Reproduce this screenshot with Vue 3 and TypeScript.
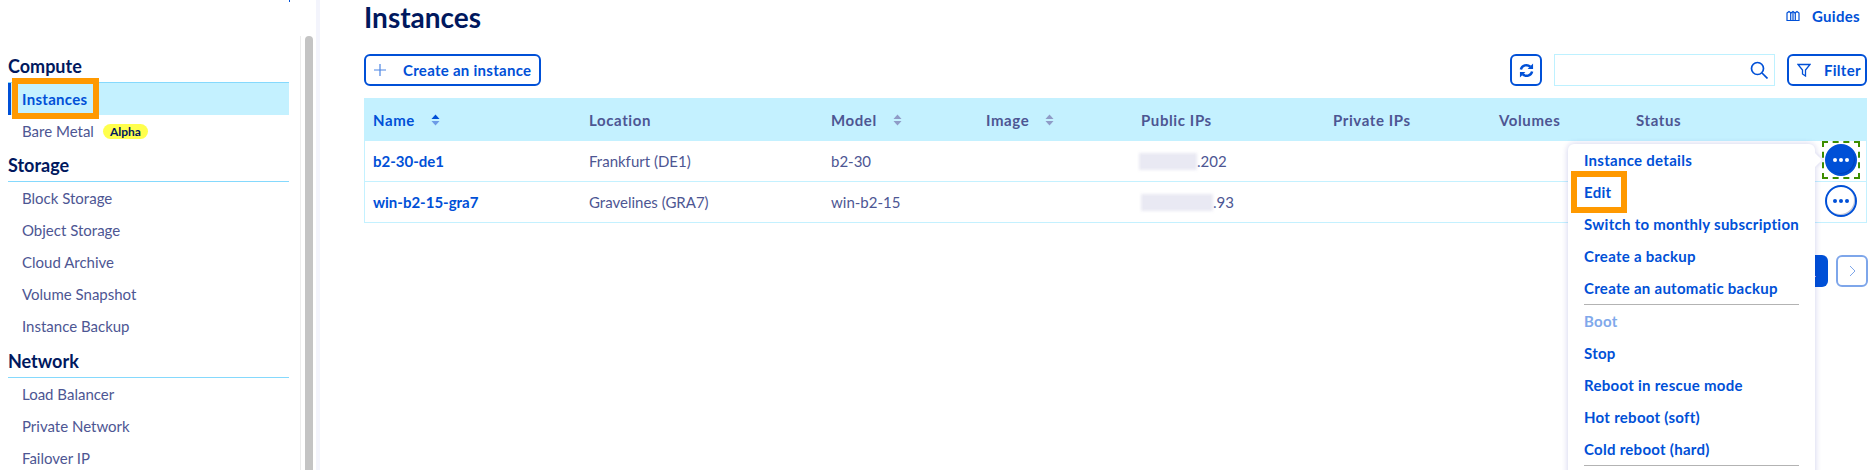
<script setup lang="ts">
interface NavItem {
  label: string;
  active?: boolean;
  badge?: string;
}

interface NavSection {
  title: string;
  items: NavItem[];
}

interface MenuItem {
  label: string;
  disabled?: boolean;
  marked?: boolean;
  divider?: boolean;
}

const sections: NavSection[] = [
  {
    title: 'Compute',
    items: [
      { label: 'Instances', active: true },
      { label: 'Bare Metal', badge: 'Alpha' },
    ],
  },
  {
    title: 'Storage',
    items: [
      { label: 'Block Storage' },
      { label: 'Object Storage' },
      { label: 'Cloud Archive' },
      { label: 'Volume Snapshot' },
      { label: 'Instance Backup' },
    ],
  },
  {
    title: 'Network',
    items: [
      { label: 'Load Balancer' },
      { label: 'Private Network' },
      { label: 'Failover IP' },
    ],
  },
];

const columns = [
  { label: 'Name', sort: 'active' },
  { label: 'Location' },
  { label: 'Model', sort: 'idle' },
  { label: 'Image', sort: 'idle' },
  { label: 'Public IPs' },
  { label: 'Private IPs' },
  { label: 'Volumes' },
  { label: 'Status' },
];

const rows = [
  { name: 'b2-30-de1', location: 'Frankfurt (DE1)', model: 'b2-30', blur: 58, ip: '.202', shift: 0, open: true },
  { name: 'win-b2-15-gra7', location: 'Gravelines (GRA7)', model: 'win-b2-15', blur: 72, ip: '.93', shift: 2, open: false },
];

const menu: MenuItem[] = [
  { label: 'Instance details' },
  { label: 'Edit', marked: true },
  { label: 'Switch to monthly subscription' },
  { label: 'Create a backup' },
  { label: 'Create an automatic backup', divider: true },
  { label: 'Boot', disabled: true },
  { label: 'Stop' },
  { label: 'Reboot in rescue mode' },
  { label: 'Hot reboot (soft)' },
  { label: 'Cold reboot (hard)', divider: true },
];
</script>

<template>
  <div class="page">
    <aside class="sidebar">
      <span class="top-tick"></span>
      <nav class="nav">
        <section v-for="section in sections" :key="section.title" class="nav-section">
          <h4 class="nav-title">{{ section.title }}</h4>
          <div
            v-for="item in section.items"
            :key="item.label"
            class="nav-item"
            :class="{ active: item.active }"
          >
            {{ item.label }}
            <span v-if="item.badge" class="badge">{{ item.badge }}</span>
          </div>
        </section>
      </nav>
      <div class="scrollbar"><span class="thumb"></span></div>
    </aside>

    <main class="main">
      <header class="head">
        <h1 class="title">Instances</h1>
        <a class="guides">
          <svg width="14" height="12" viewBox="0 0 14 12" fill="none" stroke="#0050d7" stroke-width="1.2">
            <path d="M1 3 L3 1.5 L5 3 L7 1.5 L9 3 L11 1.5 L13 3 V10.5 H1 Z" />
            <path d="M4.7 3 V10.5 M9.3 3 V10.5 M7 2 V10.5" />
          </svg>
          Guides
        </a>
      </header>

      <div class="toolbar">
        <button class="btn create">
          <svg class="plus" width="12" height="12" viewBox="0 0 12 12" stroke="#4d85e3" stroke-width="1.2">
            <path d="M6 0 V12 M0 6 H12" />
          </svg>
          Create an instance
        </button>
        <div class="toolbar-right">
          <button class="btn refresh">
            <svg width="15" height="15" viewBox="0 0 16 16" fill="none" stroke="#0050d7" stroke-width="2.6">
              <path d="M2 7 A6 6 0 0 1 12 4" />
              <path d="M14 9 A6 6 0 0 1 4 12" />
              <path d="M15 0.6 V6.4 H9.2 Z M1 15.4 V9.6 H6.8 Z" fill="#0050d7" stroke="none" />
            </svg>
          </button>
          <div class="search">
            <svg width="18" height="18" viewBox="0 0 18 18" fill="none" stroke="#0050d7" stroke-width="1.7">
              <circle cx="7.5" cy="7.5" r="6" />
              <path d="M12 12 L17.5 17.5" />
            </svg>
          </div>
          <button class="btn filter">
            <svg width="14" height="14" viewBox="0 0 14 14" fill="none" stroke="#0050d7" stroke-width="1.3">
              <path d="M1 1.5 H13 L8.5 7 V13 L5.5 11 V7 Z" />
            </svg>
            Filter
          </button>
        </div>
      </div>

      <div class="table">
        <div class="tr thead">
          <div v-for="col in columns" :key="col.label" class="th" :class="{ sorted: col.sort === 'active' }">
            {{ col.label }}
            <svg v-if="col.sort" class="sort" width="9" height="12" viewBox="0 0 9 12">
              <path d="M4.5 0.5 L8.5 5 H0.5 Z" :fill="col.sort === 'active' ? '#0050d7' : '#8f9bc7'" />
              <path d="M4.5 11.5 L8.5 7 H0.5 Z" :fill="col.sort === 'active' ? '#6c9be6' : '#8f9bc7'" />
            </svg>
          </div>
          <div></div>
        </div>
        <div v-for="row in rows" :key="row.name" class="tr tbody">
          <div class="td name">{{ row.name }}</div>
          <div class="td">{{ row.location }}</div>
          <div class="td">{{ row.model }}</div>
          <div class="td"></div>
          <div class="td ip" :class="{ shifted: row.shift }">
            <span class="blur" :style="{ width: row.blur + 'px' }"></span>{{ row.ip }}
          </div>
          <div class="td"></div>
          <div class="td"></div>
          <div class="td"></div>
          <div class="action">
            <div class="more-wrap" :class="{ open: row.open }">
              <span class="more"><i></i><i></i><i></i></span>
            </div>
          </div>
        </div>
      </div>

      <div class="pager">
        <span class="page-current">1</span>
        <span class="page-next">
          <svg width="7" height="12" viewBox="0 0 7 12" fill="none" stroke="#0050d7" stroke-width="1">
            <path d="M1 1 L6 6 L1 11" />
          </svg>
        </span>
      </div>
    </main>

    <div class="menu">
      <template v-for="entry in menu" :key="entry.label">
        <div class="menu-item" :class="{ disabled: entry.disabled, marked: entry.marked }">{{ entry.label }}</div>
        <div v-if="entry.divider" class="menu-divider"></div>
      </template>
    </div>
  </div>
</template>

<style scoped>
.page {
  position: relative;
  display: flex;
  width: 1870px;
  height: 470px;
  overflow: hidden;
  background: #fff;
  color: #4d5693;
  font-family: Lato, "Noto Sans", sans-serif;
  font-size: 15px;
}
.sidebar {
  position: relative;
  display: flex;
  flex: 0 0 320px;
  box-sizing: border-box;
  border-right: 4px solid #f3f4fc;
}
.top-tick {
  position: absolute;
  top: 0;
  left: 289px;
  width: 1px;
  height: 2px;
  background: #0050d7;
}
.nav {
  flex: 0 0 281px;
  margin-left: 8px;
  padding-top: 48px;
}
.nav-section {
  margin-top: 1px;
}
.nav-section:last-child {
  margin-top: 2px;
}
.nav-title {
  box-sizing: border-box;
  height: 34px;
  margin: 0;
  padding-top: 7px;
  border-bottom: 1px solid #85d9fd;
  color: #00185e;
  font-size: 18px;
  font-weight: 700;
  line-height: 20px;
}
.nav-item {
  position: relative;
  display: flex;
  align-items: center;
  height: 32px;
  padding-left: 14px;
  line-height: 32px;
}
.nav-item.active {
  padding-left: 11px;
  border-left: 3px solid #0050d7;
  background: #c4f1ff;
  color: #0050d7;
  font-weight: 700;
  letter-spacing: 0.3px;
}
.nav-item.active::after {
  content: "";
  position: absolute;
  top: -5px;
  bottom: -4px;
  left: 1px;
  width: 87px;
  box-sizing: border-box;
  border: 6px solid #ff9900;
}
.badge {
  margin-left: 9px;
  padding: 0 7px;
  border-radius: 8px;
  background: #ffff4d;
  color: #00185e;
  font-size: 12px;
  font-weight: 700;
  line-height: 15px;
}
.scrollbar {
  display: flex;
  justify-content: center;
  width: 15px;
  margin: 36px 0 0 auto;
  border-left: 1px solid #ececec;
}
.thumb {
  width: 8px;
  height: 100%;
  border-radius: 4px 4px 0 0;
  background: #c4c4c4;
}
.main {
  flex: 1;
  padding: 0 3px 0 44px;
  min-width: 0;
}
.head {
  display: flex;
  align-items: center;
  justify-content: space-between;
  height: 36px;
}
.title {
  margin: -2px 0 0;
  color: #00185e;
  font-size: 28px;
  font-weight: 700;
  line-height: 36px;
}
.guides {
  display: flex;
  align-items: center;
  gap: 12px;
  margin: 0 7px 4px 0;
  color: #0050d7;
  font-weight: 700;
  letter-spacing: 0.3px;
}
.toolbar {
  display: flex;
  justify-content: space-between;
  height: 32px;
  margin-top: 18px;
}
.toolbar-right {
  display: flex;
  gap: 12px;
}
.btn {
  display: inline-flex;
  align-items: center;
  box-sizing: border-box;
  height: 32px;
  padding: 0;
  border: 2px solid #0050d7;
  border-radius: 6px;
  background: #fff;
  color: #0050d7;
  font: inherit;
  font-weight: 700;
  letter-spacing: 0.28px;
}
.create {
  width: 177px;
  padding-left: 8px;
}
.plus {
  margin-right: 17px;
}
.refresh {
  justify-content: center;
  width: 32px;
}
.search {
  display: flex;
  align-items: center;
  justify-content: flex-end;
  box-sizing: border-box;
  width: 221px;
  height: 32px;
  padding-right: 6px;
  border: 1px solid #bef1ff;
}
.filter {
  gap: 13px;
  width: 80px;
  padding-left: 8px;
}
.table {
  margin-top: 12px;
}
.tr {
  display: grid;
  grid-template-columns: 216px 242px 155px 155px 192px 166px 137px 1fr 64px;
  box-sizing: border-box;
}
.thead {
  height: 43px;
  align-items: center;
  background: #c4f1ff;
}
.th {
  display: flex;
  align-items: center;
  padding-left: 9px;
  font-weight: 700;
  letter-spacing: 0.6px;
}
.th.sorted {
  color: #0050d7;
}
.sort {
  margin-left: 16px;
}
.tbody {
  height: 41px;
  border: solid #c4f1ff;
  border-width: 0 1px 1px;
  align-items: center;
}
.td {
  padding-left: 8px;
}
.name {
  color: #0050d7;
  font-weight: 700;
}
.ip {
  display: flex;
  align-items: center;
  padding-left: 6px;
}
.ip.shifted {
  padding-left: 8px;
}
.blur {
  display: inline-block;
  height: 17px;
  background: #e9e9f3;
  filter: blur(1.5px);
}
.action {
  display: flex;
  justify-content: flex-end;
  align-self: start;
  padding-right: 6px;
}
.more-wrap {
  display: flex;
  align-items: center;
  justify-content: center;
  box-sizing: border-box;
  width: 38px;
  height: 38px;
  border: 2px dashed transparent;
}
.more {
  display: flex;
  align-items: center;
  justify-content: center;
  gap: 2px;
  flex: none;
  box-sizing: border-box;
  width: 32px;
  height: 32px;
  border: 2px solid #0050d7;
  border-radius: 50%;
  background: #fff;
  box-shadow: inset -1px -1px 0 rgba(0, 24, 94, 0.25);
}
.more i {
  width: 4px;
  height: 4px;
  border-radius: 50%;
  background: #0050d7;
}
.more-wrap.open {
  border-color: #3c8d00;
}
.more-wrap.open .more {
  background: #0050d7;
}
.more-wrap.open i {
  background: #fff;
}
.pager {
  display: flex;
  justify-content: flex-end;
  gap: 8px;
  margin: 32px -1px 0 0;
}
.page-current {
  display: block;
  width: 32px;
  height: 32px;
  border-radius: 0 6px 6px 0;
  background: #0050d7;
  color: #fff;
  line-height: 32px;
  text-align: center;
}
.page-next {
  display: flex;
  align-items: center;
  justify-content: center;
  box-sizing: border-box;
  width: 32px;
  height: 32px;
  border: 2px solid #0050d7;
  border-radius: 6px;
  opacity: 0.5;
}
.menu {
  position: absolute;
  top: 144px;
  left: 1568px;
  box-sizing: border-box;
  width: 247px;
  height: 340px;
  padding: 0 16px;
  border-radius: 6px;
  background: #fff;
  box-shadow: 0 0 6px rgba(0, 14, 156, 0.2);
}
.menu::after {
  content: "";
  position: absolute;
  top: 11px;
  right: -5px;
  width: 10px;
  height: 10px;
  background: #fff;
  box-shadow: 2px -2px 3px rgba(0, 14, 156, 0.08);
  transform: rotate(45deg);
}
.menu-item {
  position: relative;
  height: 32px;
  color: #0050d7;
  font-weight: 700;
  letter-spacing: 0.28px;
  line-height: 32px;
  white-space: nowrap;
}
.menu-item.disabled {
  color: #80a8eb;
}
.menu-item.marked::after {
  content: "";
  position: absolute;
  top: -5px;
  left: -13px;
  width: 56px;
  height: 42px;
  box-sizing: border-box;
  border: 6px solid #ff9900;
}
.menu-divider {
  height: 1px;
  background: #b3b3b3;
}
</style>

<style>
html,
body {
  margin: 0;
  overflow: hidden;
}
</style>
